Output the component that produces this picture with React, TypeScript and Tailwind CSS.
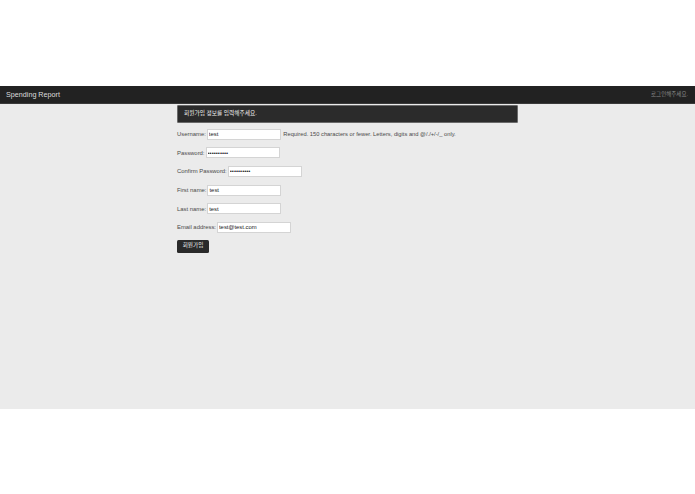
const fields = [
  { label: 'Username:', type: 'text', value: 'test', help: 'Required. 150 characters or fewer. Letters, digits and @/./+/-/_ only.' },
  { label: 'Password:', type: 'password', value: 'test123456' },
  { label: 'Confirm Password:', type: 'password', value: 'test123456' },
  { label: 'First name:', type: 'text', value: 'test' },
  { label: 'Last name:', type: 'text', value: 'test' },
  { label: 'Email address:', type: 'email', value: 'test@test.com' },
];

const App = () => {
  return (
    <div className="min-h-[494px] bg-white font-['Liberation_Sans','Noto_Sans_CJK_KR',sans-serif]">
      <div className="h-[86px]" />
      {/* Navbar */}
      <nav className="h-[18px] bg-[#222222] border-b border-[#3a3a3a] flex items-center justify-between px-[6px]">
        <span className="text-[7.2px] text-[#dcdcdc] leading-none">Spending Report</span>
        <span className="text-[5.5px] text-[#8a8a8a] leading-none pr-[1px]">로그인해주세요.</span>
      </nav>

      <main className="h-[305px] bg-[#ebebeb] pt-px">
        <div className="w-[341px] mx-auto">
          <div className="h-[18px] bg-[#2b2b2b] border border-[#6a6a6a] rounded-[1px] flex items-center px-[6px]">
            <span className="text-[5.7px] text-[#f2f2f2] leading-none">회원가입 정보를 입력해주세요.</span>
          </div>

          <form className="mt-[2px]">
            {fields.map((f) => (
              <div key={f.label} className="h-[18.6px] flex items-center text-[5.9px] text-[#4a4a4a]">
                <label className="leading-[11px] pt-[1px]">{f.label}</label>
                <input
                  type={f.type}
                  defaultValue={f.value}
                  readOnly
                  className="ml-[1px] w-[74px] h-[11px] bg-white border border-[#d4d4d4] px-px text-[5.9px] text-[#222222] outline-none"
                />
                {f.help && <span className="ml-[2.5px] leading-[11px] pt-[1px] text-[5.75px]">{f.help}</span>}
              </div>
            ))}
            <button
              type="button"
              className="mt-[3px] w-[32px] h-[13px] bg-[#2a2a2a] rounded-[1.5px] text-[5.6px] text-[#eeeeee] leading-none flex items-center justify-center"
            >
              회원가입
            </button>
          </form>
        </div>
      </main>
    </div>
  );
};

export default App;
